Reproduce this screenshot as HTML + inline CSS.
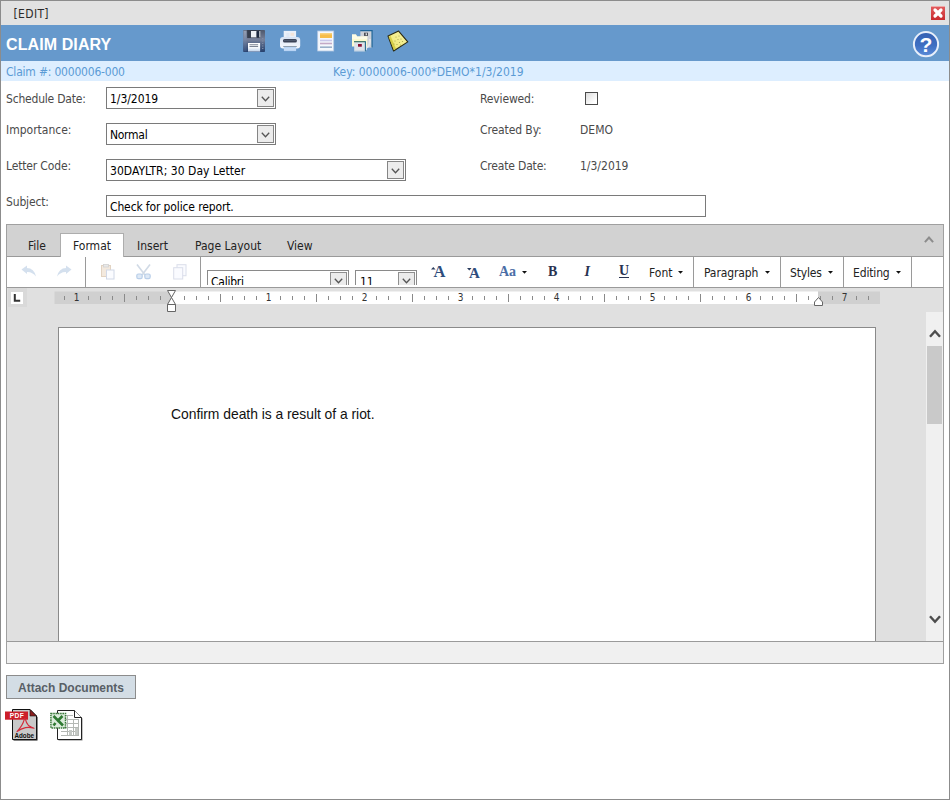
<!DOCTYPE html>
<html>
<head>
<meta charset="utf-8">
<title>Claim Diary</title>
<style>
html,body{margin:0;padding:0;}
body{width:950px;height:800px;position:relative;overflow:hidden;background:#fff;
  font-family:"DejaVu Sans Condensed","Liberation Sans",sans-serif;font-size:12px;color:#333;}
.abs{position:absolute;}
.t{position:absolute;white-space:nowrap;line-height:16px;height:16px;}
svg{position:absolute;overflow:visible;}
#frame{position:absolute;left:0;top:0;width:948px;height:798px;border:1px solid #8c8c8c;pointer-events:none;z-index:50;}
#titlebar{left:1px;top:1px;width:948px;height:24px;background:#e2e2e2;}
#hdr{left:1px;top:25px;width:948px;height:36px;background:#6699cc;}
#sub{left:1px;top:61px;width:948px;height:20px;background:#ddeeff;}
.lbl{color:#4a4a4a;}
.blue{color:#5b9bd5;}
.sel{position:absolute;box-sizing:border-box;border:1px solid #7a7a7a;background:#fff;height:23px;}
.sel .v{position:absolute;left:3px;top:3px;line-height:16px;color:#000;white-space:nowrap;}
.sel .btn{position:absolute;right:1px;top:1px;width:17px;height:18px;box-sizing:border-box;border:1px solid #858585;background:#ececec;}
.sel .btn svg{left:3px;top:6px;}
.vsep{position:absolute;width:1px;background:#9a9a9a;top:257px;height:30px;}
.tab{color:#222;}
.dd{position:absolute;width:0;height:0;border-left:3px solid transparent;border-right:3px solid transparent;border-top:3px solid #111;}
.ser{font-family:"Liberation Serif",serif;font-weight:bold;}
</style>
</head>
<body>
<!-- window chrome -->
<div id="titlebar" class="abs"></div>
<div id="t_edit" class="t" style="left:13.5px;top:6px;color:#2a2a2a;letter-spacing:0.35px;">[EDIT]</div>
<div id="closebtn" class="abs" style="left:931px;top:6px;width:14px;height:14px;background:linear-gradient(#e05a5c,#c92a2e);border-top:1px solid #efa8a8;box-sizing:border-box;">
  <svg width="14" height="14" viewBox="0 0 14 14" style="left:0;top:-1px;"><path d="M4 4 L10 10 M10 4 L4 10" stroke="#fff" stroke-width="3.2" stroke-linecap="round" fill="none"/></svg>
</div>
<div id="hdr" class="abs"></div>
<div id="t_claim" class="t" style="left:6px;top:36px;font-family:'Liberation Sans',sans-serif;font-weight:bold;font-size:16px;letter-spacing:0.1px;color:#fff;line-height:18px;height:18px;">CLAIM DIARY</div>
<div id="sub" class="abs"></div>
<div id="t_claimno" class="t blue" style="left:6px;top:64px;letter-spacing:-0.2px;">Claim #: 0000006-000</div>
<div id="t_key" class="t blue" style="left:333px;top:64px;">Key: 0000006-000*DEMO*1/3/2019</div>
<!-- header icons -->
<svg id="ic_save" width="22" height="22" viewBox="0 0 22 22" style="left:243px;top:30px;">
  <defs>
    <linearGradient id="gsv" x1="0" y1="0" x2="0" y2="1"><stop offset="0" stop-color="#4d576b"/><stop offset="0.45" stop-color="#77819a"/><stop offset="0.62" stop-color="#566788"/><stop offset="1" stop-color="#26416e"/></linearGradient>
    <linearGradient id="gsv2" x1="0" y1="0" x2="0" y2="1"><stop offset="0" stop-color="#a3adc0"/><stop offset="1" stop-color="#3b5480"/></linearGradient>
    <linearGradient id="gsv3" x1="0" y1="0" x2="0" y2="1"><stop offset="0" stop-color="#ffffff"/><stop offset="0.55" stop-color="#f4f7fb"/><stop offset="1" stop-color="#bcd0ea"/></linearGradient>
  </defs>
  <rect x="0.2" y="0" width="21.8" height="22" rx="0.8" fill="url(#gsv)"/>
  <rect x="0.4" y="0.6" width="3.2" height="20.8" fill="url(#gsv2)" opacity="0.85"/>
  <rect x="4.2" y="0" width="13" height="8" fill="#353d4d"/>
  <rect x="8" y="1" width="5.6" height="6.4" fill="#eef1f5"/>
  <rect x="13.6" y="1.3" width="2.7" height="5.8" fill="#1d2940"/>
  <rect x="16.3" y="1" width="1" height="6.4" fill="#dfe3ea"/>
  <rect x="5" y="13" width="12.1" height="8.6" fill="url(#gsv3)"/>
  <rect x="6.5" y="14.4" width="8.6" height="0.8" fill="#5d6778"/>
  <rect x="6.5" y="16.2" width="8.6" height="0.8" fill="#5d6778"/>
  <g fill="#7d8aa3"><rect x="19" y="8" width="1.4" height="1"/><rect x="19" y="10.5" width="1.4" height="1"/><rect x="19" y="13" width="1.4" height="1"/><rect x="19" y="15.5" width="1.4" height="1"/><rect x="19" y="18" width="1.4" height="1"/></g>
</svg>
<svg id="ic_print" width="22" height="22" viewBox="0 0 22 22" style="left:279px;top:30px;">
  <defs><linearGradient id="gpr" x1="0" y1="0" x2="0" y2="1"><stop offset="0" stop-color="#d6e2f3"/><stop offset="0.5" stop-color="#e9eff9"/><stop offset="1" stop-color="#f3f6fc"/></linearGradient></defs>
  <rect x="4.7" y="0.9" width="12.4" height="9" fill="#eaf0f9"/>
  <rect x="7.3" y="3" width="3.2" height="4" fill="#dfe8f5"/><rect x="11.5" y="2.8" width="3.6" height="3" fill="#f3e4da"/>
  <rect x="1" y="7" width="20.2" height="11.6" rx="3" fill="url(#gpr)"/>
  <rect x="4" y="8.9" width="13.9" height="3.6" rx="1.6" fill="#3a4256"/>
  <rect x="5" y="9.9" width="11.9" height="0.7" fill="#5e6a80"/>
  <rect x="4.9" y="16.5" width="12.2" height="4.6" fill="#b9d4f4"/>
  <rect x="4.2" y="16" width="13.6" height="0.9" fill="#8797a6"/>
  <rect x="4.9" y="18.6" width="12.2" height="0.8" fill="#d6e6fa"/>
</svg>
<svg id="ic_doc" width="18" height="22" viewBox="0 0 18 22" style="left:317px;top:30px;">
  <rect x="0.7" y="1" width="16" height="20" fill="#f5f8fc" stroke="#b5c9e4" stroke-width="0.8"/>
  <rect x="3" y="3" width="12" height="5" fill="#f6bd4a"/>
  <rect x="3" y="3" width="12" height="1.5" fill="#f9d27d"/>
  <rect x="3" y="9.7" width="12" height="1.6" fill="#c9c7ea"/>
  <rect x="3" y="12.7" width="12" height="1.6" fill="#c3a9c6"/>
  <rect x="3" y="16.4" width="12" height="1.6" fill="#9bb0c9"/>
</svg>
<svg id="ic_folder" width="22" height="22" viewBox="0 0 22 22" style="left:351px;top:30px;">
  <rect x="9.4" y="0.4" width="12" height="17.2" fill="#cdd2d8"/>
  <path d="M9.2 0.6 H21.1 V17.6" fill="none" stroke="#1f669a" stroke-width="1.3"/>
  <rect x="13" y="2.7" width="4" height="3.2" fill="#4a4e55"/><rect x="14.6" y="3.3" width="1.4" height="1.9" fill="#d8dadd"/>
  <path d="M20 9 Q20.5 16 16 18.6 L16 20.6 L13 17.6 L16 14.6 L16 16.4 Q18 14.4 18 9 Z" fill="#e1e5ea"/>
  <path d="M1 4.6 L5 4.6 L6 6.6 L16.2 6.6 L16.2 16.5 L1 16.5 Z" fill="#fbfad0"/>
  <path d="M1 4.6 L5 4.6 L6 6.6 L16.2 6.6 L16.2 9 L1 9 Z" fill="#fdfce6"/>
  <rect x="3.2" y="11.4" width="11.6" height="10.1" fill="#dde3ea"/>
  <path d="M3 11.7 H14.4" fill="none" stroke="#2b6a58" stroke-width="1.1"/>
  <path d="M14.4 11.2 V21.5" fill="none" stroke="#256a8c" stroke-width="1.1"/>
  <path d="M3.2 21.2 H14.4" fill="none" stroke="#8eb4d6" stroke-width="0.8"/>
  <rect x="7" y="14" width="3.8" height="2.7" fill="#8c1232"/>
</svg>
<svg id="ic_note" width="22" height="22" viewBox="0 0 22 22" style="left:387px;top:30px;">
  <defs><linearGradient id="gnt" x1="0" y1="1" x2="1" y2="0"><stop offset="0" stop-color="#c9c22a"/><stop offset="0.3" stop-color="#f1eb80"/><stop offset="1" stop-color="#f6f2a4"/></linearGradient></defs>
  <path d="M11.6 1.1 L20.8 11.9 L6.6 21 L1 6 Z" fill="url(#gnt)" stroke="#2b2a12" stroke-width="1.1" stroke-linejoin="round"/>
  <path d="M1.6 7 L6.9 20.2 L9 18.8 L3.6 6 Z" fill="#cfc83a" opacity="0.8"/>
  <g fill="#8d8a3a" opacity="0.75"><circle cx="9" cy="7" r="0.6"/><circle cx="12" cy="6" r="0.6"/><circle cx="11" cy="9.5" r="0.6"/><circle cx="14" cy="9" r="0.6"/><circle cx="8" cy="11" r="0.6"/><circle cx="12.5" cy="12.5" r="0.6"/><circle cx="10" cy="14.5" r="0.6"/><circle cx="15.5" cy="11.5" r="0.6"/><circle cx="7" cy="14" r="0.6"/><circle cx="13.5" cy="15" r="0.6"/></g>
</svg>
<svg id="ic_help" width="28" height="28" viewBox="0 0 28 28" style="left:912px;top:30px;">
  <defs><linearGradient id="ghp" x1="0" y1="0" x2="0" y2="1"><stop offset="0" stop-color="#3561b2"/><stop offset="0.55" stop-color="#3f6fc2"/><stop offset="1" stop-color="#5b8cd8"/></linearGradient></defs>
  <circle cx="14" cy="14.2" r="12.1" fill="url(#ghp)" stroke="#e8effa" stroke-width="2"/>
  <text x="13.8" y="21.6" text-anchor="middle" font-family="Liberation Sans, sans-serif" font-weight="bold" font-size="21" fill="#fff">?</text>
</svg>
<!-- form -->
<div id="l_sched" class="t lbl" style="left:6px;top:91px;letter-spacing:-0.2px;">Schedule Date:</div>
<div id="l_imp" class="t lbl" style="left:6px;top:122px;">Importance:</div>
<div id="l_letter" class="t lbl" style="left:6px;top:158px;letter-spacing:-0.15px;">Letter Code:</div>
<div id="l_subj" class="t lbl" style="left:6px;top:194px;letter-spacing:-0.15px;">Subject:</div>
<div id="l_rev" class="t lbl" style="left:480px;top:91px;letter-spacing:-0.15px;">Reviewed:</div>
<div id="l_cby" class="t lbl" style="left:480px;top:122px;letter-spacing:-0.1px;">Created By:</div>
<div id="l_cdate" class="t lbl" style="left:480px;top:158px;letter-spacing:-0.18px;">Create Date:</div>
<div id="v_demo" class="t lbl" style="left:580px;top:122px;">DEMO</div>
<div id="v_cdate" class="t lbl" style="left:580px;top:158px;">1/3/2019</div>
<div id="chk" class="abs" style="left:585px;top:92px;width:13px;height:13px;box-sizing:border-box;border:1px solid #4a4a4a;background:linear-gradient(135deg,#dcdcdc,#ffffff 80%);"></div>

<div id="s_sched" class="sel" style="left:106px;top:87px;width:170px;height:22px;"><span id="v_sched" class="v" style="letter-spacing:-0.05px;">1/3/2019</span><span class="btn"><svg width="9" height="6" viewBox="0 0 9 6"><path d="M0.8 0.8 L4.5 4.8 L8.2 0.8" stroke="#555" stroke-width="1.3" fill="none"/></svg></span></div>
<div id="s_imp" class="sel" style="left:106px;top:123px;width:170px;height:22px;"><span id="v_imp" class="v" style="letter-spacing:-0.28px;">Normal</span><span class="btn"><svg width="9" height="6" viewBox="0 0 9 6"><path d="M0.8 0.8 L4.5 4.8 L8.2 0.8" stroke="#555" stroke-width="1.3" fill="none"/></svg></span></div>
<div id="s_letter" class="sel" style="left:106px;top:159px;width:300px;height:22px;"><span id="v_letter" class="v" style="letter-spacing:0.04px;">30DAYLTR; 30 Day Letter</span><span class="btn"><svg width="9" height="6" viewBox="0 0 9 6"><path d="M0.8 0.8 L4.5 4.8 L8.2 0.8" stroke="#555" stroke-width="1.3" fill="none"/></svg></span></div>
<div id="s_subj" class="sel" style="left:106px;top:195px;width:600px;height:22px;"><span id="v_subj" class="v" style="letter-spacing:-0.13px;">Check for police report.</span></div>
<!-- editor -->
<div id="editor" class="abs" style="left:6px;top:224px;width:936px;height:438px;border:1px solid #a0a0a0;background:#e0e0e0;"></div>
<div id="tabbar" class="abs" style="left:7px;top:225px;width:936px;height:31px;background:#d2d2d2;border-bottom:1px solid #9a9a9a;"></div>
<div id="tabact" class="abs" style="left:60px;top:233px;width:62px;height:24px;background:#fff;border:1px solid #adadad;border-bottom:none;"></div>
<div id="tb_file" class="t tab" style="left:28px;top:238px;">File</div>
<div id="tb_format" class="t tab" style="left:73px;top:238px;">Format</div>
<div id="tb_insert" class="t tab" style="left:137px;top:238px;">Insert</div>
<div id="tb_layout" class="t tab" style="left:195px;top:238px;">Page Layout</div>
<div id="tb_view" class="t tab" style="left:287px;top:238px;">View</div>
<svg id="collapse" width="10" height="7" viewBox="0 0 10 7" style="left:924.4px;top:236.4px;"><path d="M0.9 6.2 L5 1.6 L9.1 6.2" stroke="#8c8c8c" stroke-width="2" fill="none"/></svg>

<div id="toolbar" class="abs" style="left:7px;top:257px;width:936px;height:30px;background:#fff;border-bottom:1px solid #9a9a9a;"></div>
<div id="tbclip" class="abs" style="left:7px;top:257px;width:936px;height:28px;overflow:hidden;">
  <!-- inside coords: x-7, y-257 -->
  <div id="cb_font" class="abs" style="left:200px;top:13px;width:142px;height:24px;box-sizing:border-box;border:1px solid #8a8a8a;background:#fff;">
    <span id="v_calibri" class="t" style="left:3px;top:3px;color:#000;letter-spacing:-0.25px;">Calibri</span>
    <span class="abs" style="right:1px;top:1px;width:17px;height:20px;box-sizing:border-box;border:1px solid #8f8f8f;background:#ebebeb;"><svg width="9" height="6" viewBox="0 0 9 6" style="left:3px;top:4.5px;"><path d="M0.8 0.8 L4.5 4.8 L8.2 0.8" stroke="#555" stroke-width="1.3" fill="none"/></svg></span>
  </div>
  <div id="cb_size" class="abs" style="left:348px;top:13px;width:62px;height:24px;box-sizing:border-box;border:1px solid #8a8a8a;background:#fff;">
    <span id="v_size" class="t" style="left:4px;top:3px;color:#000;">11</span>
    <span class="abs" style="right:1px;top:1px;width:17px;height:20px;box-sizing:border-box;border:1px solid #8f8f8f;background:#ebebeb;"><svg width="9" height="6" viewBox="0 0 9 6" style="left:3px;top:4.5px;"><path d="M0.8 0.8 L4.5 4.8 L8.2 0.8" stroke="#555" stroke-width="1.3" fill="none"/></svg></span>
  </div>
</div>
<div class="vsep" style="left:85px;"></div>
<div class="vsep" style="left:200px;"></div>
<div class="vsep" style="left:693px;"></div>
<div class="vsep" style="left:780px;"></div>
<div class="vsep" style="left:843px;"></div>
<div class="vsep" style="left:911px;"></div>

<!-- toolbar icons (disabled, faded) -->
<svg id="ic_undo" opacity="0.8" width="16" height="12" viewBox="0 0 16 12" style="left:21px;top:265px;"><path d="M0.5 4.5 L6 0.5 L6 3 Q13 3 15 11.5 Q11 6.5 6 7 L6 9 Z" fill="#c9d8ea"/></svg>
<svg id="ic_redo" opacity="0.8" width="16" height="12" viewBox="0 0 16 12" style="left:56px;top:265px;"><path d="M15.5 4.5 L10 0.5 L10 3 Q3 3 1 11.5 Q5 6.5 10 7 L10 9 Z" fill="#c9d8ea"/></svg>
<svg id="ic_paste" opacity="0.8" width="14" height="16" viewBox="0 0 14 16" style="left:101px;top:264px;">
  <rect x="0.5" y="1.5" width="9" height="11" fill="#f1e4d6" stroke="#dcc9b4" stroke-width="1"/>
  <rect x="2.5" y="0.5" width="5" height="2.5" fill="#e4e4e4" stroke="#c8c8c8" stroke-width="0.8"/>
  <rect x="5.5" y="6" width="7.5" height="9" fill="#fbfcff" stroke="#c6cfe2" stroke-width="1"/>
</svg>
<svg id="ic_cut" opacity="0.8" width="15" height="16" viewBox="0 0 15 16" style="left:136px;top:264px;">
  <path d="M1 0.5 L9 11 M14 0.5 L6 11" stroke="#c6d2e0" stroke-width="1.6" fill="none"/>
  <rect x="0.8" y="10" width="5.4" height="4.6" rx="1.6" fill="#d6e4f4" stroke="#a9c4e4" stroke-width="1.2"/>
  <rect x="8.8" y="10" width="5.4" height="4.6" rx="1.6" fill="#d6e4f4" stroke="#a9c4e4" stroke-width="1.2"/>
</svg>
<svg id="ic_copy" opacity="0.8" width="14" height="16" viewBox="0 0 14 16" style="left:173px;top:264px;">
  <rect x="4" y="0.7" width="9" height="11" fill="#fafbff" stroke="#d2d6e6" stroke-width="1"/>
  <rect x="0.7" y="3.7" width="9" height="11.3" fill="#fafbff" stroke="#d2d6e6" stroke-width="1"/>
</svg>

<!-- format buttons -->
<svg width="4.6" height="2.6" viewBox="0 0 4.6 2.6" style="left:430.5px;top:266.6px;"><path d="M0 2.6 L2.3 0 L4.6 2.6 Z" fill="#2b3d5e"/></svg>
<div id="b_grow" class="t ser" style="left:433.5px;top:262px;font-size:16.5px;line-height:20px;height:20px;color:#2e4d7d;">A</div>
<svg width="4.6" height="2.6" viewBox="0 0 4.6 2.6" style="left:467px;top:268px;"><path d="M0 0 L4.6 0 L2.3 2.6 Z" fill="#2b3d5e"/></svg>
<div id="b_shrink" class="t ser" style="left:469px;top:264px;font-size:15px;line-height:18px;height:18px;color:#2e4d7d;">A</div>
<div id="b_case" class="t ser" style="left:499px;top:263px;font-size:14px;line-height:18px;height:18px;color:#4b6ea6;">Aa</div>
<svg width="5" height="2.8" viewBox="0 0 5 2.8" style="left:522.2px;top:270.8px;"><path d="M0 0 L5 0 L2.5 2.8 Z" fill="#111"/></svg>
<div id="b_bold" class="t ser" style="left:548px;top:263px;font-size:14px;line-height:18px;height:18px;color:#283250;">B</div>
<div id="b_ital" class="t ser" style="left:584.5px;top:263px;font-size:14px;line-height:18px;height:18px;color:#283250;font-style:italic;">I</div>
<div id="b_under" class="t ser" style="left:619px;top:262px;font-size:14px;line-height:18px;height:18px;color:#283250;">U</div>
<div class="abs" style="left:619px;top:277px;width:10px;height:1px;background:#283250;"></div>
<div id="m_font" class="t tab" style="left:649px;top:265px;">Font</div>
<svg width="5" height="2.8" viewBox="0 0 5 2.8" style="left:678px;top:271.3px;"><path d="M0 0 L5 0 L2.5 2.8 Z" fill="#111"/></svg>
<div id="m_para" class="t tab" style="left:704px;top:265px;letter-spacing:-0.1px;">Paragraph</div>
<svg width="5" height="2.8" viewBox="0 0 5 2.8" style="left:765.3px;top:271.3px;"><path d="M0 0 L5 0 L2.5 2.8 Z" fill="#111"/></svg>
<div id="m_styles" class="t tab" style="left:790px;top:265px;letter-spacing:-0.15px;">Styles</div>
<svg width="5" height="2.8" viewBox="0 0 5 2.8" style="left:827.8px;top:271.3px;"><path d="M0 0 L5 0 L2.5 2.8 Z" fill="#111"/></svg>
<div id="m_edit" class="t tab" style="left:853px;top:265px;letter-spacing:-0.15px;">Editing</div>
<svg width="5" height="2.8" viewBox="0 0 5 2.8" style="left:896px;top:271.3px;"><path d="M0 0 L5 0 L2.5 2.8 Z" fill="#111"/></svg>
<svg id="ruler" width="950" height="30" viewBox="0 288 950 30" style="left:0;top:288px;">
  <rect x="8" y="288" width="19" height="19" fill="#d9d9d9"/>
  <rect x="11" y="292" width="12" height="12" fill="#fff"/>
  <path d="M14.8 294 V300.8 H20.2" stroke="#333" stroke-width="2" fill="none"/>
  <rect x="54.5" y="291.5" width="117.5" height="12.5" fill="#d0d0d0"/>
  <rect x="172" y="291.5" width="646" height="12.5" fill="#fff"/>
  <rect x="818" y="291.5" width="62" height="12.5" fill="#d0d0d0"/>
  <g fill="#8a8a8a"><rect x="64" y="296" width="1" height="4"/><rect x="88" y="296" width="1" height="4"/><rect x="100" y="296" width="1" height="4"/><rect x="112" y="296" width="1" height="4"/><rect x="124" y="294" width="1" height="8"/><rect x="136" y="296" width="1" height="4"/><rect x="148" y="296" width="1" height="4"/><rect x="160" y="296" width="1" height="4"/><rect x="184" y="296" width="1" height="4"/><rect x="196" y="296" width="1" height="4"/><rect x="208" y="296" width="1" height="4"/><rect x="220" y="294" width="1" height="8"/><rect x="232" y="296" width="1" height="4"/><rect x="244" y="296" width="1" height="4"/><rect x="256" y="296" width="1" height="4"/><rect x="280" y="296" width="1" height="4"/><rect x="292" y="296" width="1" height="4"/><rect x="304" y="296" width="1" height="4"/><rect x="316" y="294" width="1" height="8"/><rect x="328" y="296" width="1" height="4"/><rect x="340" y="296" width="1" height="4"/><rect x="352" y="296" width="1" height="4"/><rect x="376" y="296" width="1" height="4"/><rect x="388" y="296" width="1" height="4"/><rect x="400" y="296" width="1" height="4"/><rect x="412" y="294" width="1" height="8"/><rect x="424" y="296" width="1" height="4"/><rect x="436" y="296" width="1" height="4"/><rect x="448" y="296" width="1" height="4"/><rect x="472" y="296" width="1" height="4"/><rect x="484" y="296" width="1" height="4"/><rect x="496" y="296" width="1" height="4"/><rect x="508" y="294" width="1" height="8"/><rect x="520" y="296" width="1" height="4"/><rect x="532" y="296" width="1" height="4"/><rect x="544" y="296" width="1" height="4"/><rect x="568" y="296" width="1" height="4"/><rect x="580" y="296" width="1" height="4"/><rect x="592" y="296" width="1" height="4"/><rect x="604" y="294" width="1" height="8"/><rect x="616" y="296" width="1" height="4"/><rect x="628" y="296" width="1" height="4"/><rect x="640" y="296" width="1" height="4"/><rect x="664" y="296" width="1" height="4"/><rect x="676" y="296" width="1" height="4"/><rect x="688" y="296" width="1" height="4"/><rect x="700" y="294" width="1" height="8"/><rect x="712" y="296" width="1" height="4"/><rect x="724" y="296" width="1" height="4"/><rect x="736" y="296" width="1" height="4"/><rect x="760" y="296" width="1" height="4"/><rect x="772" y="296" width="1" height="4"/><rect x="784" y="296" width="1" height="4"/><rect x="796" y="294" width="1" height="8"/><rect x="808" y="296" width="1" height="4"/><rect x="820" y="296" width="1" height="4"/><rect x="832" y="296" width="1" height="4"/><rect x="856" y="296" width="1" height="4"/><rect x="868" y="296" width="1" height="4"/></g>
  <g font-family="DejaVu Sans Condensed, Liberation Sans, sans-serif" font-size="10" fill="#333"><text x="76.5" y="301.2" text-anchor="middle">1</text><text x="268.5" y="301.2" text-anchor="middle">1</text><text x="364.5" y="301.2" text-anchor="middle">2</text><text x="460.5" y="301.2" text-anchor="middle">3</text><text x="556.5" y="301.2" text-anchor="middle">4</text><text x="652.5" y="301.2" text-anchor="middle">5</text><text x="748.5" y="301.2" text-anchor="middle">6</text><text x="844.5" y="301.2" text-anchor="middle">7</text></g>
  <path d="M167.5 290.5 H175.5 L171.5 297.5 Z M171.5 297.5 L175.5 304.5 H167.5 Z M167.5 304.5 H175.5 V311.5 H167.5 Z" fill="#fff" stroke="#666" stroke-width="1"/>
  <path d="M814.5 305.5 V302 L818.5 297.5 L822.5 302 V305.5 Z" fill="#fff" stroke="#666" stroke-width="1"/>
</svg>
<!-- document area -->
<div id="page" class="abs" style="left:58px;top:327px;width:816px;height:320px;background:#fff;border:1px solid #8a8a8a;border-bottom:none;"></div>
<div id="doctext" class="t" style="left:171px;top:405px;font-family:'Liberation Sans',sans-serif;font-size:13.9px;letter-spacing:-0.03px;line-height:18px;height:18px;color:#111;">Confirm death is a result of a riot.</div>
<div id="sbar" class="abs" style="left:926px;top:312px;width:17px;height:329px;background:#f0f0f0;"></div>
<div id="sthumb" class="abs" style="left:927px;top:346px;width:15px;height:78px;background:#c9c9c9;"></div>
<svg id="sup" width="12" height="9" viewBox="0 0 12 9" style="left:928.7px;top:329px;"><path d="M1 7.8 L6 2.2 L11 7.8" stroke="#4d4d4d" stroke-width="2.4" fill="none"/></svg>
<svg id="sdown" width="12" height="9" viewBox="0 0 12 9" style="left:928.7px;top:615px;"><path d="M1 1.2 L6 6.8 L11 1.2" stroke="#4d4d4d" stroke-width="2.4" fill="none"/></svg>
<div id="status" class="abs" style="left:7px;top:641px;width:936px;height:21px;background:#f0f0f0;border-top:1px solid #9a9a9a;"></div>

<!-- attach -->
<div id="attach" class="abs" style="left:6px;top:675px;width:130px;height:24px;box-sizing:border-box;border:1px solid #8c8c8c;background:#d3dde5;"></div>
<div id="t_attach" class="t" style="left:18px;top:680px;font-family:'Liberation Sans',sans-serif;font-weight:bold;font-size:12px;color:#585f66;">Attach Documents</div>
<svg id="ic_pdf" width="34" height="34" viewBox="0 0 34 34" style="left:4px;top:708px;">
  <path d="M9.5 2.5 H27 L33.5 9 V32.5 H9.5 Z" fill="#111"/>
  <path d="M8.5 1.5 H26 L32.5 8 V31.5 H8.5 Z" fill="#c9c9c9" stroke="#111" stroke-width="1"/>
  <path d="M26 1.5 L32.5 8 H26 Z" fill="#8c1c1c" stroke="#111" stroke-width="0.6"/>
  <rect x="1" y="3.5" width="23" height="8.2" fill="#cc1f2a"/>
  <text x="5.7" y="10" textLength="14" lengthAdjust="spacing" font-family="Liberation Sans, sans-serif" font-weight="bold" font-size="6.6" fill="#fff">PDF</text>
  <path d="M13 23.6 Q18.5 18 20.4 11.2 Q20.6 10 21.4 11.2 Q22 14.5 24.5 17.5 Q27 19 30 20.2 Q25.5 19 21.5 19.6 Q17 20.5 13 23.6 Z" fill="none" stroke="#d42a3a" stroke-width="1.15" stroke-linejoin="round"/>
  <text x="10.4" y="30" textLength="19.6" lengthAdjust="spacingAndGlyphs" font-family="Liberation Sans, sans-serif" font-weight="bold" font-size="8" fill="#111">Adobe</text>
</svg>
<svg id="ic_xls" width="34" height="32" viewBox="0 0 34 32" style="left:49px;top:709px;">
  <path d="M9.5 2.5 H26 L33.5 9.5 V31.5 H9.5 Z" fill="#888"/>
  <path d="M8.5 1.5 H25.5 L32.5 8.5 V30.5 H8.5 Z" fill="#fff" stroke="#222" stroke-width="1"/>
  <path d="M25.5 1.5 V8.5 H32.5" fill="#fff" stroke="#222" stroke-width="1"/>
  <g stroke="#b4b8b4" stroke-width="1" fill="none">
    <path d="M12 6.5 H24 M12 10.5 H30 M12 14.5 H30 M12 18.5 H30 M12 22.5 H30 M12 26.5 H30"/>
    <path d="M18.5 6 V27 M24.5 10 V27 M29.5 10 V27"/>
  </g>
  <rect x="20" y="21" width="3" height="5" fill="#c4c8c4"/><rect x="26" y="19" width="3" height="7" fill="#c4c8c4"/>
  <rect x="1.9" y="4.5" width="14.6" height="14.4" fill="#dcecdc" stroke="#3b7b3b" stroke-width="1.5" stroke-dasharray="1.6 0.7"/>
  <path d="M4.5 7 L14 16.5 M13.5 7 L8 12.5 M6.5 14 L4.5 16.5" stroke="#2f7a32" stroke-width="2.6" fill="none"/>
</svg>
<div id="frame"></div>
</body>
</html>
